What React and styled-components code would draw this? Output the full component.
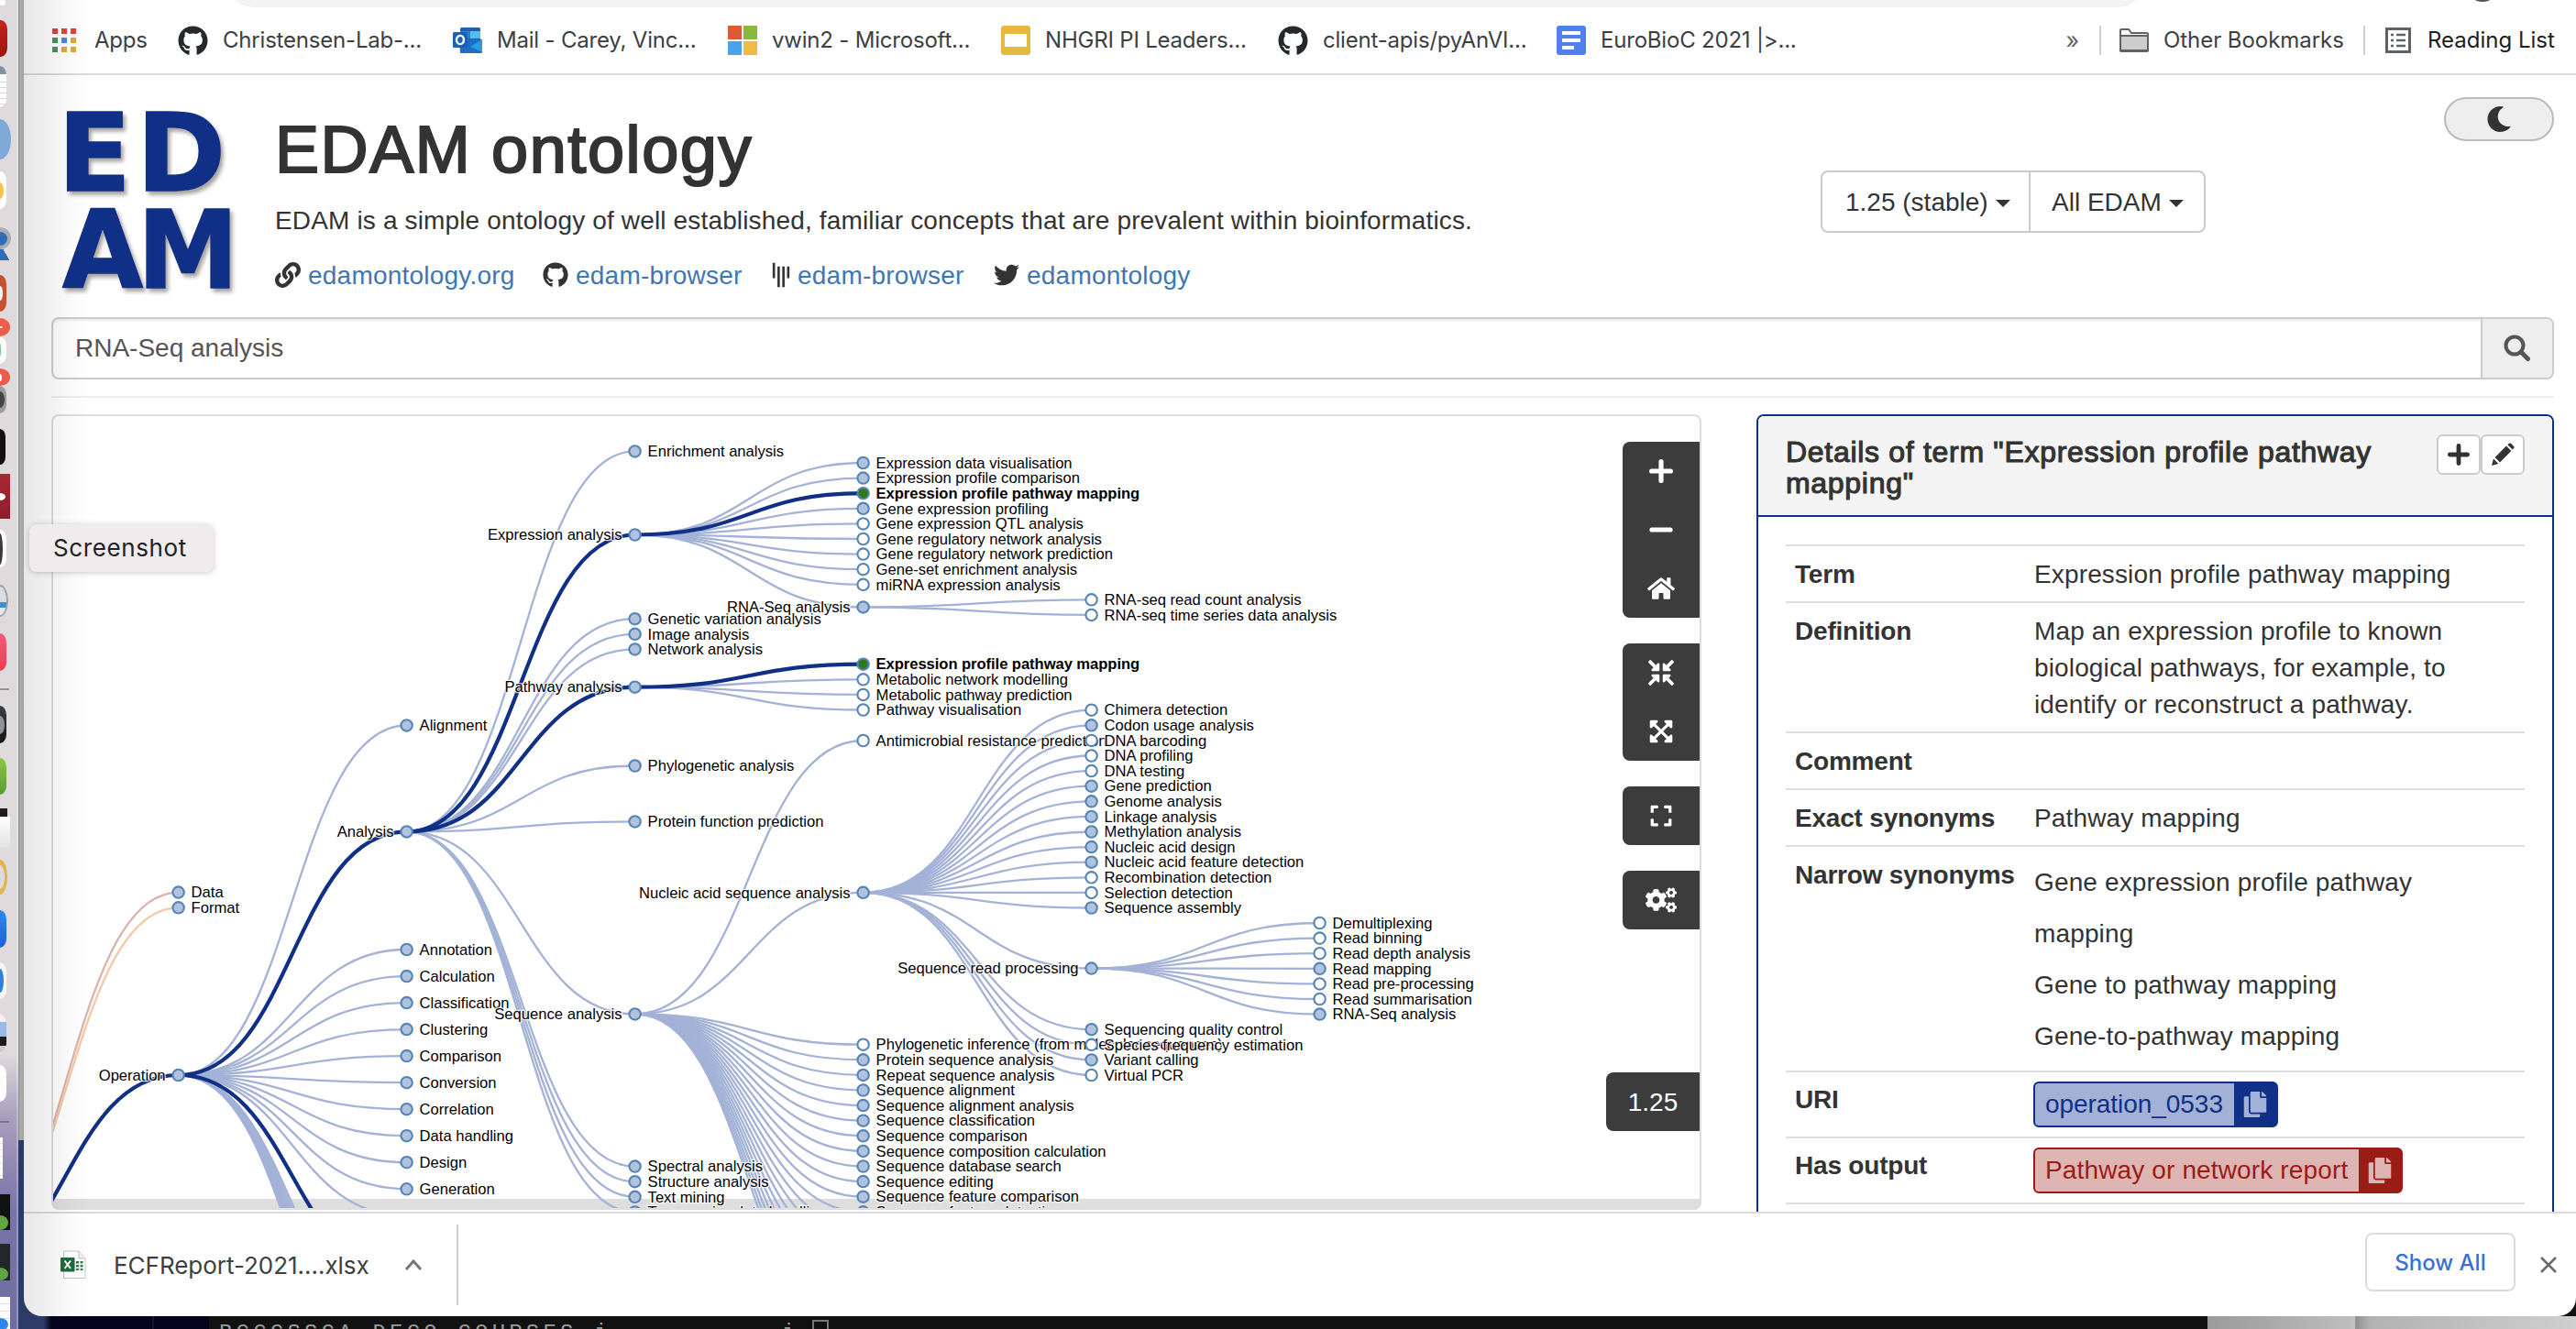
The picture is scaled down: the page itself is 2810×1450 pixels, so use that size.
import React from "react";
import styled, { createGlobalStyle } from "styled-components";
import {
  FaGithub, FaLink, FaGitter, FaTwitter, FaMoon, FaCopy, FaCogs,
  FaCompressArrowsAlt, FaExpandArrowsAlt, FaExpand, FaHome,
} from "react-icons/fa";

const SANS = '"Liberation Sans", Arial, sans-serif';
const UI = 'Inter, "Liberation Sans", sans-serif';
const NAVY = "#102f87";

const Global = createGlobalStyle`
  * { box-sizing: border-box; }
  body { margin: 0; background: #111; font-family: ${SANS}; color: #333; }
  svg { display: block; flex: none; }
`;

/* ---------- desktop ---------- */
const Desktop = styled.div`
  position: relative;
  width: 2810px;
  height: 1450px;
  overflow: hidden;
  background: #111;
`;
const Backdrop = styled.div`
  position: absolute;
  inset: 0;
  display: flex;
  align-items: flex-end;
`;
const Wallpaper = styled.div`
  width: 228px;
  height: 206px;
  background: linear-gradient(90deg, #2c3a66 0 48px, #03031b 56px 166px, #15152c 166px 168px, #03031b 168px);
`;
const Terminal = styled.div`
  width: 2180px;
  height: 14px;
  padding: 9px 0 0 11px;
  overflow: hidden;
  display: flex;
  background: #111;
  color: #999;
  font: 24px/20px "Liberation Mono", monospace;
  letter-spacing: 4.2px;
  white-space: pre;
`;
const Cursor = styled.i`
  flex: none;
  width: 18px;
  height: 30px;
  margin: -5px 0 0 auto;
  border: 2px solid #777;
`;
const TermLine = styled.div`
  display: flex;
  width: 665px;
`;
const BackWindow = styled.div`
  flex: 1;
  height: 14px;
  background: linear-gradient(90deg, #9a9a9a, #bdbdbd 38%, #c3c3c3 40%, #8f8f8f 40.2%, #b2b2b2 44%, #cfcfcf);
`;

/* ---------- dock ---------- */
const Dock = styled.div`
  position: absolute;
  left: 0;
  top: 0;
  width: 20px;
  height: 1450px;
  overflow: hidden;
  border-right: 2px solid rgba(255, 255, 255, 0.25);
  background: linear-gradient(#dfdadc 0 1150px, #aaa1bf 1215px, #7a74a8 1320px, #6f6da0);
  display: flex;
  flex-direction: column;
  align-items: flex-start;
`;
const DockEdge = styled.div`
  position: absolute;
  left: 20px;
  top: 0;
  width: 6px;
  height: 1244px;
  background: linear-gradient(90deg, #8f8f8f, #adadad 40%, #a0a0a0);
`;
const DockIcon = styled.div`
  flex: none;
  width: ${(p) => p.$w || 7}px;
  height: ${(p) => p.$h}px;
  margin-top: ${(p) => p.$gap}px;
  border-radius: ${(p) => (p.$square ? "0" : p.$round ? "0 100% 100% 0 / 0 50% 50% 0" : "0 7px 7px 0 / 0 10px 10px 0")};
  background: ${(p) => p.$bg};
  overflow: hidden;
  display: flex;
  align-items: ${(p) => (p.$low ? "flex-end" : "center")};
`;
const DockMark = styled.i`
  display: block;
  width: ${(p) => p.$w}px;
  height: ${(p) => p.$h}px;
  background: ${(p) => p.$bg};
  border-radius: 0 100% 100% 0 / 0 50% 50% 0;
`;
const DockRule = styled.div`
  flex: none;
  width: 10px;
  height: 2px;
  margin-top: ${(p) => p.$gap}px;
  background: rgba(90, 80, 90, 0.5);
`;

const Tooltip = styled.div`
  position: absolute;
  left: 32px;
  top: 572px;
  width: 201px;
  height: 52px;
  padding-left: 26px;
  border-radius: 8px;
  background: #f0ecee;
  box-shadow: 0 1px 6px rgba(0, 0, 0, 0.22);
  color: #222;
  font: 26px/51px ${UI};
  letter-spacing: 0.6px;
`;

/* ---------- browser window ---------- */
const Window = styled.div`
  position: absolute;
  left: 26px;
  top: 0;
  width: 2784px;
  height: 1436px;
  display: flex;
  flex-direction: column;
  overflow: hidden;
  background: #fff;
  border-radius: 0 0 20px 20px;
`;
const DockShade = styled.div`
  position: absolute;
  left: 26px;
  top: 0;
  width: 75px;
  height: 1436px;
  border-radius: 0 0 0 20px;
  pointer-events: none;
  background: linear-gradient(90deg, rgba(0, 0, 0, 0.09), rgba(0, 0, 0, 0.055) 40%, rgba(0, 0, 0, 0.015) 70%, transparent);
`;
const AddressRow = styled.div`
  flex: none;
  height: 8px;
  display: flex;
  overflow: hidden;
  padding-left: 222px;
`;
const AddressPill = styled.div`
  width: 2091px;
  height: 56px;
  margin-top: -48px;
  border-radius: 28px;
  background: #f1f3f4;
`;
const Avatar = styled.div`
  width: 36px;
  height: 36px;
  margin: -34px 0 0 351px;
  border-radius: 50%;
  background: #5b5451;
`;
const Bookmarks = styled.nav`
  flex: none;
  height: 74px;
  padding: 0 23px 0 31px;
  border-bottom: 2px solid #dadada;
  display: flex;
  align-items: center;
  font: 24px/32px ${UI};
  color: #3c4043;
  white-space: nowrap;
`;
const Bookmark = styled.div`
  width: ${(p) => p.$w}px;
  display: flex;
  align-items: center;
  gap: ${(p) => p.$gap || 16}px;
  letter-spacing: ${(p) => p.$ls ?? -0.2}px;
  color: ${(p) => p.$color || "inherit"};
`;
const Spacer = styled.div`
  flex: 1;
`;
const Separator = styled.i`
  width: 2px;
  height: ${(p) => p.$h || 32}px;
  margin: 0 ${(p) => p.$right || 0}px 0 ${(p) => p.$left || 0}px;
  background: #ccced1;
`;
const More = styled.span`
  font-size: 25px;
  line-height: 30px;
  color: #5f6368;
`;

/* ---------- page ---------- */
const Page = styled.main`
  flex: 1;
  min-height: 0;
  overflow: hidden;
  padding: 0 24px 0 30px;
  display: flex;
  flex-direction: column;
`;
const Header = styled.header`
  flex: none;
  height: 264px;
  display: flex;
  align-items: flex-start;
`;
const Intro = styled.div`
  width: 1726px;
  padding: 41px 0 0 40px;
`;
const Title = styled.h1`
  margin: 0 0 18px;
  font: 400 72px/80px ${SANS};
  letter-spacing: 1.6px;
  -webkit-text-stroke: 2.1px #333;
  white-space: nowrap;
`;
const Lead = styled.p`
  margin: 0 0 20px;
  font-size: 28px;
  line-height: 40px;
  letter-spacing: 0.15px;
  white-space: nowrap;
`;
const Links = styled.div`
  display: flex;
  font-size: 28px;
  line-height: 40px;
  letter-spacing: 0.22px;
`;
const SiteLink = styled.a`
  width: ${(p) => p.$w}px;
  display: flex;
  align-items: center;
  gap: 8px;
  color: #3f76b3;
  svg { color: #333; margin-top: -3px; }
`;
const Versions = styled.div`
  margin-top: 104px;
  width: 420px;
  height: 68px;
  display: flex;
  border: 2px solid #ccc;
  border-radius: 8px;
  font-size: 28px;
  line-height: 40px;
`;
const VersionButton = styled.button`
  width: ${(p) => p.$w}px;
  border: 0;
  border-left: ${(p) => (p.$divided ? "2px solid #ccc" : "0")};
  padding: 2px 0 0 ${(p) => (p.$divided ? 23 : 25)}px;
  background: none;
  display: flex;
  align-items: center;
  gap: 8px;
  font: inherit;
  color: inherit;
  white-space: nowrap;
`;
const Caret = styled.i`
  border: 8px solid transparent;
  border-top-color: #333;
  border-bottom: 0;
  margin-top: 1px;
`;
const ThemeToggle = styled.button`
  width: 120px;
  height: 48px;
  margin: 24px 0 0 auto;
  border: 2px solid #bbb;
  border-radius: 24px;
  background: #eee;
  color: #333;
  display: flex;
  align-items: center;
  justify-content: center;
  padding: 0;
`;
const Search = styled.div`
  flex: none;
  height: 68px;
  display: flex;
  border: 2px solid #ccc;
  border-radius: 8px;
  box-shadow: inset 0 2px 2px rgba(0, 0, 0, 0.075);
`;
const SearchText = styled.div`
  flex: 1;
  padding-left: 24px;
  font-size: 28px;
  line-height: 64px;
  color: #555;
`;
const SearchButton = styled.div`
  width: 78px;
  border-left: 2px solid #ccc;
  border-radius: 0 6px 6px 0;
  background: #eee;
  display: flex;
  align-items: center;
  justify-content: center;
`;
const Rule = styled.hr`
  flex: none;
  width: 100%;
  height: 2px;
  margin: 18px 0;
  border: 0;
  background: #eee;
`;
const Columns = styled.div`
  flex: none;
  height: 870px;
  display: flex;
  align-items: flex-start;
  justify-content: space-between;
`;

/* ---------- graph panel ---------- */
const Graph = styled.section`
  position: relative;
  width: 1800px;
  height: 868px;
  border: 2px solid #ddd;
  border-bottom-width: 1px;
  border-radius: 8px;
  overflow: hidden;
  background: linear-gradient(#fff 0 854px, #dedede 854px);
`;
const Tools = styled.div`
  position: absolute;
  right: 0;
  top: 28px;
  display: flex;
  flex-direction: column;
  align-items: flex-end;
  gap: 28px;
`;
const ToolGroup = styled.div`
  width: 84px;
  border-radius: 8px 0 0 8px;
  background: #3c3c3c;
  color: #fff;
`;
const Tool = styled.div`
  height: 64px;
  display: flex;
  align-items: center;
  justify-content: center;
`;
const Release = styled.div`
  width: 102px;
  height: 64px;
  margin-top: 128px;
  border-radius: 8px 0 0 8px;
  background: #3c3c3c;
  color: #fff;
  font-size: 28px;
  line-height: 65px;
  text-align: center;
`;
const NodeLabel = styled.text`
  font: ${(p) => (p.$bold ? 700 : 400)} 16.6px ${SANS};
  letter-spacing: ${(p) => (p.$bold ? -0.06 : 0)}px;
  fill: #000;
  stroke: rgba(255, 255, 255, 0.75);
  stroke-width: 2.6px;
  paint-order: stroke;
`;

/* ---------- details ---------- */
const Details = styled.section`
  width: 870px;
  height: 900px;
  border: 2px solid ${NAVY};
  border-radius: 8px;
  overflow: hidden;
`;
const DetailsHead = styled.div`
  height: 110px;
  padding: 20px 30px 0 30px;
  border-bottom: 2px solid ${NAVY};
  background: #f4f4f4;
  display: flex;
  align-items: flex-start;
  justify-content: space-between;
`;
const DetailsTitle = styled.h3`
  width: 660px;
  margin: 2px 0 0;
  font: 400 32px/34px ${SANS};
  letter-spacing: 0.7px;
  -webkit-text-stroke: 1.1px #333;
`;
const HeadButtons = styled.div`
  display: flex;
`;
const HeadButton = styled.button`
  width: 48px;
  height: 44px;
  padding: 0;
  border: 2px solid #ccc;
  border-radius: 6px;
  background: #fff;
  display: flex;
  align-items: center;
  justify-content: center;
`;
const Terms = styled.dl`
  margin: 30px 30px 0 30px;
  font-size: 28px;
  line-height: 40px;
`;
const TermRow = styled.div`
  display: grid;
  grid-template-columns: 270px 1fr;
  border-top: 2px solid #ddd;
  padding: ${(p) => (p.$tag ? "10px 0" : "11px 0 9px")};
  min-height: 62px;
`;
const Name = styled.dt`
  padding-left: 10px;
  font-weight: 700;
  letter-spacing: -0.2px;
  white-space: nowrap;
`;
const Value = styled.dd`
  margin: 0;
  padding-left: 1px;
  letter-spacing: 0.14px;
  line-height: ${(p) => p.$lh || 40}px;
`;
const Tag = styled.span`
  display: inline-flex;
  height: 50px;
  border: 2px solid ${(p) => p.$ink};
  border-radius: 6px;
  background: ${(p) => p.$bg};
  color: ${(p) => p.$ink};
  line-height: 46px;
  vertical-align: top;
  margin-left: -1px;
`;
const TagText = styled.span`
  width: ${(p) => p.$w}px;
  padding-left: 11px;
  letter-spacing: ${(p) => p.$ls}px;
  white-space: nowrap;
`;
const TagCopy = styled.span`
  width: 46px;
  display: flex;
  align-items: center;
  justify-content: center;
  background: ${(p) => p.$ink};
  color: ${(p) => p.$bg};
`;

/* ---------- download bar ---------- */
const Downloads = styled.footer`
  flex: none;
  height: 114px;
  border-top: 2px solid #dadada;
  display: flex;
  align-items: center;
  padding: 0 20px 0 40px;
  font-family: ${UI};
`;
const FileName = styled.span`
  width: 317px;
  margin: 2px 0 0 30px;
  font-size: 26px;
  line-height: 36px;
  letter-spacing: -0.03px;
  color: #3c4043;
`;
const ShowAll = styled.button`
  width: 164px;
  height: 64px;
  margin: -6px 26px 0 0;
  border: 2px solid #dadce0;
  border-radius: 8px;
  background: #fff;
  color: #3b6fd6;
  font: 500 24px/60px ${UI};
`;

/* ---------- tree data ---------- */
const COL = (d) => 194.6 + 249 * (d - 1);
const STEP = 16.6;
const run = (start, text) =>
  text.split("|").map((t, i) => {
    const open = t[0] === "+";
    const hot = t[0] === "*";
    return { name: open || hot ? t.slice(1) : t, y: start + i * STEP, leaf: !open && !hot, hot };
  });
const hidden = (from, count, step) =>
  Array.from({ length: count }, (_, i) => ({ name: "", y: from + i * step }));

const readProcessing = {
  name: "Sequence read processing", y: 1056.6,
  children: run(1007, "Demultiplexing|Read binning|Read depth analysis|+Read mapping|Read pre-processing|Read summarisation|+RNA-Seq analysis"),
};
const nucleic = {
  name: "Nucleic acid sequence analysis", y: 973.8,
  children: [
    ...run(774.7, "Chimera detection|+Codon usage analysis|DNA barcoding|DNA profiling|DNA testing|+Gene prediction|+Genome analysis|+Linkage analysis|+Methylation analysis|+Nucleic acid design|+Nucleic acid feature detection|Recombination detection|Selection detection|+Sequence assembly"),
    readProcessing,
    ...run(1123.2, "+Sequencing quality control|Species frequency estimation|+Variant calling|Virtual PCR"),
  ],
};
const sequence = {
  name: "Sequence analysis", y: 1106.4,
  children: [
    ...run(808, "Antimicrobial resistance prediction"),
    nucleic,
    ...run(1139.7, "Phylogenetic inference (from molecular sequences)|+Protein sequence analysis|+Repeat sequence analysis|+Sequence alignment|+Sequence alignment analysis|+Sequence classification|+Sequence comparison|+Sequence composition calculation|+Sequence database search|+Sequence editing|+Sequence feature comparison|+Sequence feature detection"),
    ...hidden(1339, 9, STEP),
  ],
};
const expression = {
  name: "Expression analysis", y: 583.5, path: true,
  children: [
    ...run(505, "+Expression data visualisation|+Expression profile comparison|*Expression profile pathway mapping|+Gene expression profiling|Gene expression QTL analysis|Gene regulatory network analysis|Gene regulatory network prediction|Gene-set enrichment analysis|miRNA expression analysis"),
    { name: "RNA-Seq analysis", y: 662.4, children: run(654.3, "RNA-seq read count analysis|RNA-seq time series data analysis") },
  ],
};
const pathway = {
  name: "Pathway analysis", y: 749.7, path: true,
  children: run(724.7, "*Expression profile pathway mapping|Metabolic network modelling|Metabolic pathway prediction|Pathway visualisation"),
};
const analysis = {
  name: "Analysis", y: 907.4, path: true,
  children: [
    ...run(492.4, "+Enrichment analysis"), expression,
    ...run(675.2, "+Genetic variation analysis|+Image analysis|+Network analysis"), pathway,
    ...run(835.5, "+Phylogenetic analysis"), ...run(896.4, "+Protein function prediction"), sequence,
    ...run(1272.6, "+Spectral analysis|+Structure analysis|+Text mining|+Trans-omics data handling"),
  ],
};
const operation = {
  name: "Operation", y: 1173, path: true,
  children: [
    ...run(791.4, "+Alignment"), analysis,
    ...["Annotation", "Calculation", "Classification", "Clustering", "Comparison", "Conversion", "Correlation", "Data handling", "Design", "Generation"]
      .map((name, i) => ({ name, y: 1036 + i * 29.03 })),
    ...hidden(1326.4, 1, 0),
    ...hidden(1455, 8, 12),
    { name: "", y: 1394, path: true },
  ],
};
const root = {
  name: "", y: 1398,
  children: [
    { name: "Data", y: 973.6, color: "#dcb2ac" },
    { name: "Format", y: 990.3, color: "#f6c8a4" },
    operation,
  ],
};

const edges = [];
const nodes = [];
const walk = (node, depth) => {
  (node.children || []).forEach((child) => {
    edges.push({ from: node, to: child, depth, strong: child.path || child.hot });
    nodes.push({ ...child, depth: depth + 1 });
    walk(child, depth + 1);
  });
};
walk(root, 0);
edges.sort((a, b) => (a.strong ? 1 : 0) - (b.strong ? 1 : 0));
nodes.sort((a, b) => a.depth - b.depth);

function Tree() {
  return (
    <svg width="1796" height="864" viewBox="58 454 1796 864">
      {edges.map((e, i) => {
        const x0 = COL(e.depth);
        const x1 = COL(e.depth + 1);
        const m = (x0 + x1) / 2;
        return (
          <path key={i} d={`M${x0},${e.from.y}C${m},${e.from.y} ${m},${e.to.y} ${x1},${e.to.y}`} fill="none"
            stroke={e.strong ? NAVY : e.to.color || "#a3b2d6"} strokeWidth={e.strong ? 4.2 : 2.3} />
        );
      })}
      {nodes.filter((n) => n.name).map((n, i) => (
        <g key={i} transform={`translate(${COL(n.depth)},${n.y})`}>
          <circle r="6.2" fill={n.hot ? "#2c7a1c" : n.leaf ? "#fff" : "#b0c2de"} stroke="#5584b5" strokeWidth="2.1" />
          <NodeLabel x={n.children ? -14 : 14} y="5.7" textAnchor={n.children ? "end" : "start"} $bold={n.hot}>{n.name}</NodeLabel>
        </g>
      ))}
    </svg>
  );
}

/* ---------- small drawings ---------- */
const AppsIcon = () => (
  <svg width="26" height="26" viewBox="0 0 26 26">
    {["#d9453c", "#d9453c", "#d9453c", "#4a9256", "#4a86e8", "#e0a73a", "#4a9256", "#e0a73a", "#e0a73a"].map((c, i) => (
      <rect key={i} x={(i % 3) * 10} y={Math.floor(i / 3) * 10} width="6" height="6" fill={c} />
    ))}
  </svg>
);
const OutlookIcon = () => (
  <svg width="32" height="30" viewBox="0 0 32 30">
    <rect x="8" y="1" width="22" height="20" rx="1.5" fill="#1f5fae" />
    <rect x="8" y="5" width="11" height="8" fill="#2a7fd0" /><rect x="19" y="5" width="11" height="8" fill="#50c0f0" />
    <path d="M7 14 32 14 32 28q0 1-1 1H8z" fill="#1d6fc6" /><path d="M32 14v14L19 22z" fill="#2c9ae6" />
    <rect x="0" y="6" width="16" height="17" rx="1.5" fill="#1a62b8" />
    <ellipse cx="8" cy="14.5" rx="4" ry="4.6" fill="none" stroke="#fff" strokeWidth="2.4" />
  </svg>
);
const MicrosoftIcon = () => (
  <svg width="32" height="32" viewBox="0 0 32 32">
    <path fill="#dc5b34" d="M0 0h15v15H0z" /><path fill="#8bb83a" d="M17 0h15v15H17z" />
    <path fill="#4ba3e8" d="M0 17h15v15H0z" /><path fill="#f2ba44" d="M17 17h15v15H17z" />
  </svg>
);
const SlidesIcon = () => (
  <svg width="32" height="32"><rect width="32" height="32" rx="3" fill="#e8b740" /><rect x="4" y="9" width="24" height="14" fill="#fff" /></svg>
);
const DocsIcon = () => (
  <svg width="32" height="32"><rect width="32" height="32" rx="3" fill="#5080ee" /><path d="M6 6h20v4H6zM6 14h20v4H6zM6 22h13v4H6z" fill="#fff" /></svg>
);
const FolderIcon = () => (
  <svg width="32" height="26" viewBox="0 0 32 26">
    <path d="M1 24V2q0-1 1-1h8l3 4h17q1 0 1 1v18q0 1-1 1H2q-1 0-1-1z" fill="#fff" stroke="#5f6368" strokeWidth="2" />
    <path d="M1 8h30v16H1z" fill="#ccc" stroke="#5f6368" strokeWidth="2" />
  </svg>
);
const ReadingIcon = () => (
  <svg width="28" height="28" viewBox="0 0 28 28">
    <rect x="1.5" y="1.5" width="25" height="25" fill="#fff" stroke="#5f6368" strokeWidth="3" />
    <path d="M6 8h3M12 8h10M6 14h3M12 14h10M6 20h3M12 20h10" stroke="#5f6368" strokeWidth="2.6" />
  </svg>
);
const PlusIcon = ({ size = 26, color = "#fff" }) => (
  <svg width={size} height={size} viewBox="0 0 26 26">
    <path d="M13 2.6v20.8M2.6 13h20.8" stroke={color} strokeWidth="5.2" strokeLinecap="round" />
  </svg>
);
const MinusIcon = () => (
  <svg width="26" height="26" viewBox="0 0 26 26"><path d="M3 13h20" stroke="#fff" strokeWidth="5.2" strokeLinecap="round" /></svg>
);
const PencilIcon = () => (
  <svg width="26" height="26" viewBox="0 0 26 26" fill="#333">
    <path d="M1 25 3 17.6 8.4 23zM4.600 16 17 3.600 22.400 9 10 21.400zM18.400 2.200 20 .8q1-.8 2 0l3.200 3.200q.8 1 0 2L23.800 7.600z" />
  </svg>
);
const SearchIcon = () => (
  <svg width="30" height="30" viewBox="0 0 30 30" fill="none" stroke="#555">
    <circle cx="12" cy="12" r="9.500" strokeWidth="4" /><path d="m19 19 7.500 7.500" strokeWidth="5" strokeLinecap="round" />
  </svg>
);
const ExcelIcon = () => (
  <svg width="28" height="32" viewBox="0 0 28 32">
    <path d="M3.500 1H20l7 8v21.500H3.500z" fill="#fff" stroke="#c4c4c4" /><path d="M20 1v8h7" fill="#eee" stroke="#c4c4c4" />
    <path d="M17 12h3v2.500h-3zM21.500 12h3v2.500h-3zM17 16h3v2.500h-3zM21.500 16h3v2.500h-3zM17 20h3v2h-3zM21.500 20h3v2h-3z" fill="#2f7d4b" />
    <rect y="8" width="15.500" height="15.500" rx="1" fill="#206b3c" />
    <path d="M4.500 11.500 11 20M11 11.500 4.500 20" stroke="#fff" strokeWidth="2" />
  </svg>
);
const LogoArt = styled.svg`
  margin: 18px 0 0 4px;
  filter: drop-shadow(3px 4px 2px rgba(60, 50, 40, 0.45)) blur(0.6px);
  text { font: 700 117px "DejaVu Sans", sans-serif; fill: ${NAVY}; stroke: ${NAVY}; stroke-width: 1.6px; }
`;
const Logo = () => (
  <LogoArt width="200" height="220" viewBox="60 100 200 220">
    <text x="63" y="208">E</text><text x="149" y="208">D</text>
    <text x="68" y="314" textLength="88" lengthAdjust="spacingAndGlyphs">A</text>
    <text x="150" y="314" textLength="110" lengthAdjust="spacingAndGlyphs">M</text>
  </LogoArt>
);

function DockIcons() {
  return (
    <Dock>
      <DockIcon $gap={0} $h={6} $w={6} $bg="#fff" />
      <DockIcon $gap={16} $h={40} $w={8} $bg="linear-gradient(#c3251b, #9c120c)" />
      <DockIcon $gap={10} $h={45} $bg="linear-gradient(#7e94ad 0 9px, #fff 9px 15px, transparent 15px), repeating-linear-gradient(#fff 0 5px, #d8d8d8 5px 6px)" />
      <DockIcon $gap={13} $h={44} $w={12} $round $bg="#7fa9d8" />
      <DockIcon $gap={13} $h={41} $bg="#fff"><DockMark $w={4} $h={18} $bg="#f6c344" /></DockIcon>
      <DockIcon $gap={20} $h={24} $w={12} $round $bg="#a9abb2"><DockMark $w={8} $h={15} $bg="#2f6db8" /></DockIcon>
      <DockIcon $gap={0} $h={12} $w={10} $square $bg="linear-gradient(60deg, #2f6db8 60%, transparent 62%)" />
      <DockIcon $gap={16} $h={40} $bg="#c8502c"><DockMark $w={3} $h={16} $bg="#fff" /></DockIcon>
      <DockIcon $gap={7} $h={20} $w={11} $round $bg="#ec5c4b"><DockMark $w={3} $h={2} $bg="#fff" /></DockIcon>
      <DockIcon $gap={0} $h={30} $bg="#fbfbfb"><DockMark $w={1} $h={14} $bg="#7fbf86" /></DockIcon>
      <DockIcon $gap={5} $h={19} $w={11} $round $bg="#ec5c4b"><DockMark $w={2} $h={8} $bg="#fff" /></DockIcon>
      <DockIcon $gap={0} $h={30} $bg="#9b9b9b"><DockMark $w={5} $h={18} $bg="#444" /></DockIcon>
      <DockIcon $gap={17} $h={39} $w={6} $bg="#111" />
      <DockIcon $gap={10} $h={49} $w={11} $square $bg="linear-gradient(#a82a33, #8e1c2b)"><DockMark $w={6} $h={8} $bg="#fff" /></DockIcon>
      <DockIcon $gap={12} $h={41} $bg="#fff"><DockMark $w={3} $h={34} $bg="#3b3b3f" /></DockIcon>
      <DockIcon $gap={19} $h={35} $w={9} $round $bg="#9aa3ab"><DockMark $w={7} $h={31} $bg="linear-gradient(#d8dde2 0 55%, #3b8bd6 55% 75%, #e8e8e8 75%)" /></DockIcon>
      <DockIcon $gap={18} $h={41} $bg="linear-gradient(#ef5a78, #ef3f4f)" />
      <DockRule $gap={19} />
      <DockIcon $gap={17} $h={41} $bg="linear-gradient(#3c4046, #15171a)"><DockMark $w={5} $h={20} $bg="#8b949c" /></DockIcon>
      <DockIcon $gap={16} $h={40} $bg="linear-gradient(#8cc63f, #5a9b3a)" />
      <DockIcon $gap={15} $h={9} $w={8} $square $bg="#1c1c1c" />
      <DockIcon $gap={0} $h={34} $w={11} $square $bg="linear-gradient(#fff, #e2e2e2)" />
      <DockIcon $gap={13} $h={38} $w={8} $round $bg="#e2b54c"><DockMark $w={5} $h={26} $bg="#dfdadc" /></DockIcon>
      <DockIcon $gap={17} $h={41} $bg="linear-gradient(#2a8af0, #1e5fdc)" />
      <DockIcon $gap={16} $h={40} $bg="#f6f6f6"><DockMark $w={4} $h={26} $bg="#2f7fe0" /></DockIcon>
      <DockIcon $gap={17} $h={41} $low $bg="linear-gradient(#f2f2f2 0 8px, #9cb8e8 8px 24px, #1b1b1b 24px 34px, #ccc 34px)" />
      <DockIcon $gap={14} $h={40} $bg="#fff" />
      <DockRule $gap={21} />
      <DockIcon $gap={16} $h={45} $w={3} $square $bg="repeating-linear-gradient(#fff 0 6px, #e4e4e4 6px 7px)" />
      <DockIcon $gap={17} $h={39} $w={11} $square $low $bg="#111"><DockMark $w={9} $h={16} $bg="#5fa641" /></DockIcon>
      <DockIcon $gap={15} $h={40} $w={11} $square $low $bg="#23262b"><DockMark $w={9} $h={14} $bg="#5fa641" /></DockIcon>
      <DockIcon $gap={18} $h={37} $w={11} $square $low $bg="repeating-linear-gradient(#fff 0 7px, #dcdcdc 7px 8px)"><DockMark $w={9} $h={14} $bg="#2f86ea" /></DockIcon>
    </Dock>
  );
}

const Row = ({ name, children, lh, tag }) => (
  <TermRow $tag={tag}><Name>{name}</Name><Value $lh={lh}>{children}</Value></TermRow>
);
const TermTag = ({ text, w, ink, bg, ls = 0 }) => (
  <Tag $ink={ink} $bg={bg}>
    <TagText $w={w} $ls={ls}>{text}</TagText>
    <TagCopy $ink={ink} $bg={bg}><FaCopy size={28} /></TagCopy>
  </Tag>
);

export default function App() {
  return (
    <Desktop>
      <Global />
      <Backdrop>
        <Wallpaper />
        <Terminal><TermLine>{"BCCCSSCA DECO COURSES i          i"}<Cursor /></TermLine></Terminal>
        <BackWindow />
      </Backdrop>
      <DockIcons />
      <DockEdge />
      <Window>
        <AddressRow><AddressPill /><Avatar /></AddressRow>
        <Bookmarks>
          <Bookmark $w={137} $gap={20}><AppsIcon />Apps</Bookmark>
          <Bookmark $w={300}><FaGithub size={33} color="#24292e" />Christensen-Lab-...</Bookmark>
          <Bookmark $w={300}><OutlookIcon />Mail - Carey, Vinc...</Bookmark>
          <Bookmark $w={298}><MicrosoftIcon />vwin2 - Microsoft...</Bookmark>
          <Bookmark $w={302}><SlidesIcon />NHGRI PI Leaders...</Bookmark>
          <Bookmark $w={304}><FaGithub size={33} color="#24292e" />client-apis/pyAnVI...</Bookmark>
          <Bookmark $w={300}><DocsIcon />EuroBioC 2021 |&gt;...</Bookmark>
          <Spacer />
          <More>»</More>
          <Separator $left={22} $right={20} />
          <Bookmark $w={266} $ls={-0.05}><FolderIcon />Other Bookmarks</Bookmark>
          <Separator $right={22} />
          <Bookmark $w={185} $gap={18} $ls={0} $color="#202124"><ReadingIcon />Reading List</Bookmark>
        </Bookmarks>
        <Page>
          <Header>
            <Logo />
            <Intro>
              <Title>EDAM ontology</Title>
              <Lead>EDAM is a simple ontology of well established, familiar concepts that are prevalent within bioinformatics.</Lead>
              <Links>
                <SiteLink $w={292}><FaLink size={28} />edamontology.org</SiteLink>
                <SiteLink $w={250}><FaGithub size={28} />edam-browser</SiteLink>
                <SiteLink $w={242}><FaGitter size={28} style={{ width: 20 }} />edam-browser</SiteLink>
                <SiteLink $w={260}><FaTwitter size={28} />edamontology</SiteLink>
              </Links>
            </Intro>
            <Versions>
              <VersionButton $w={225}>1.25 (stable)<Caret /></VersionButton>
              <VersionButton $w={191} $divided>All EDAM<Caret /></VersionButton>
            </Versions>
            <ThemeToggle><FaMoon size={28} /></ThemeToggle>
          </Header>
          <Search>
            <SearchText>RNA-Seq analysis</SearchText>
            <SearchButton><SearchIcon /></SearchButton>
          </Search>
          <Rule />
          <Columns>
            <Graph>
              <Tree />
              <Tools>
                <ToolGroup>
                  <Tool><PlusIcon /></Tool>
                  <Tool><MinusIcon /></Tool>
                  <Tool><FaHome size={30} /></Tool>
                </ToolGroup>
                <ToolGroup>
                  <Tool><FaCompressArrowsAlt size={28} /></Tool>
                  <Tool><FaExpandArrowsAlt size={28} /></Tool>
                </ToolGroup>
                <ToolGroup><Tool><FaExpand size={26} /></Tool></ToolGroup>
                <ToolGroup><Tool><FaCogs size={34} /></Tool></ToolGroup>
                <Release>1.25</Release>
              </Tools>
            </Graph>
            <Details>
              <DetailsHead>
                <DetailsTitle>Details of term "Expression profile pathway mapping"</DetailsTitle>
                <HeadButtons>
                  <HeadButton><PlusIcon size={24} color="#333" /></HeadButton>
                  <HeadButton><PencilIcon /></HeadButton>
                </HeadButtons>
              </DetailsHead>
              <Terms>
                <Row name="Term">Expression profile pathway mapping</Row>
                <Row name="Definition">Map an expression profile to known<br />biological pathways, for example, to<br />identify or reconstruct a pathway.</Row>
                <Row name="Comment" />
                <Row name="Exact synonyms">Pathway mapping</Row>
                <Row name="Narrow synonyms" lh={56}>Gene expression profile pathway<br />mapping<br />Gene to pathway mapping<br />Gene-to-pathway mapping</Row>
                <Row name="URI" tag><TermTag text="operation_0533" w={217} ls={-0.05} ink={NAVY} bg="#a2b1d5" /></Row>
                <Row name="Has output" tag><TermTag text="Pathway or network report" w={353} ls={0.14} ink="#9b1c15" bg="#deb5b3" /></Row>
                <Row name="" />
              </Terms>
            </Details>
          </Columns>
        </Page>
        <Downloads>
          <ExcelIcon />
          <FileName>ECFReport-2021....xlsx</FileName>
          <svg width="20" height="14" viewBox="0 0 20 14"><path d="m2 12 8-9 8 9" fill="none" stroke="#777" strokeWidth="3" /></svg>
          <Separator $left={37} $h={88} />
          <Spacer />
          <ShowAll>Show All</ShowAll>
          <svg width="20" height="20" viewBox="0 0 20 20"><path d="m2 2 16 16M18 2 2 18" stroke="#6b6b6b" strokeWidth="2.600" /></svg>
        </Downloads>
      </Window>
      <DockShade />
      <Tooltip>Screenshot</Tooltip>
    </Desktop>
  );
}
